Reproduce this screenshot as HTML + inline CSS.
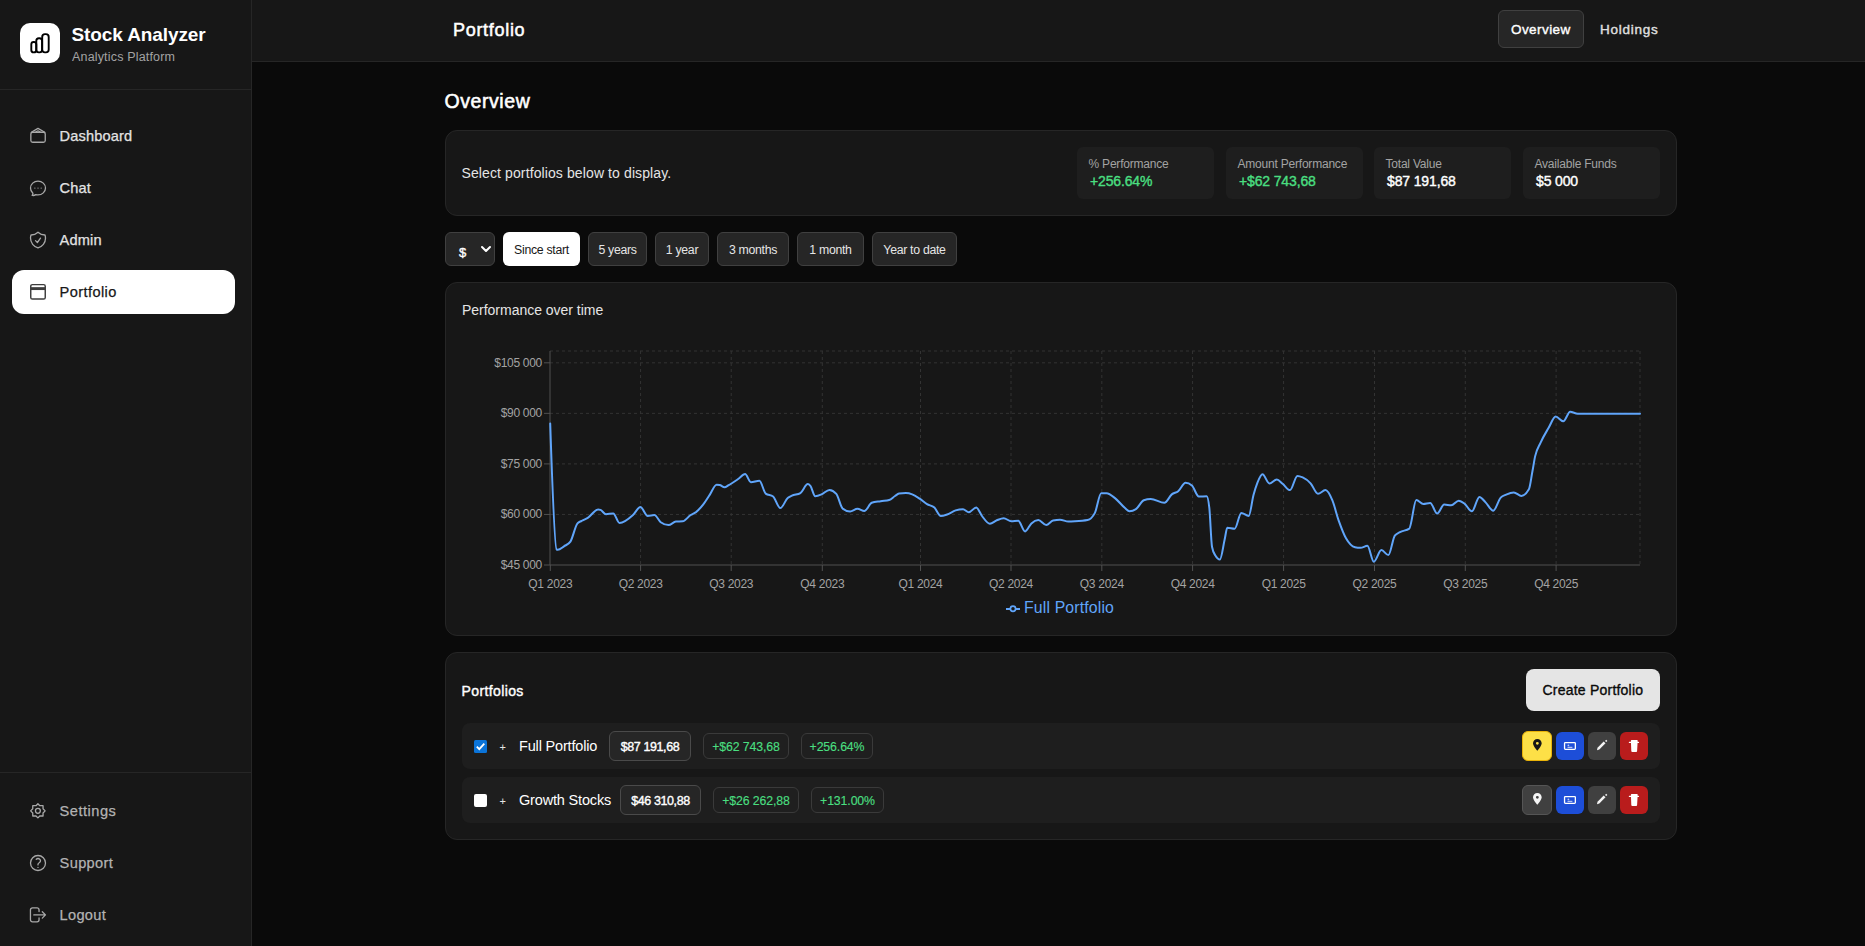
<!DOCTYPE html>
<html><head><meta charset="utf-8"><title>Stock Analyzer - Portfolio</title>
<style>
html,body{margin:0;padding:0;width:1865px;height:946px;overflow:hidden;background:#0a0a0a;font-family:"Liberation Sans",sans-serif;}
.t{position:absolute;white-space:nowrap;}
.b{position:absolute;}
</style></head><body>
<div class="b" style="left:0px;top:0px;width:252px;height:946px;background:#171717;border-radius:0px;box-sizing:border-box;border-right:1px solid #262626;"></div>
<div class="b" style="left:0px;top:89px;width:251px;height:1px;background:#262626;border-radius:0px;box-sizing:border-box;"></div>
<div class="b" style="left:0px;top:772px;width:251px;height:1px;background:#262626;border-radius:0px;box-sizing:border-box;"></div>
<div class="b" style="left:20px;top:23px;width:40px;height:40px;background:#ffffff;border-radius:10px;box-sizing:border-box;"></div>
<svg class="b" style="left:20px;top:23px" width="40" height="40" viewBox="0 0 40 40" fill="none" stroke="#000" stroke-width="1.9" stroke-linejoin="round">
<rect x="11.3" y="19" width="5" height="10.4" rx="2.4"/><rect x="16.3" y="15.2" width="5.8" height="14.2" rx="2.6"/><rect x="22.2" y="11.1" width="6.5" height="18.3" rx="2.8"/></svg>
<div class="t" style="left:71.5px;top:25.15px;font-size:19px;line-height:19px;color:#ffffff;font-weight:700;letter-spacing:-0.1px;">Stock Analyzer</div>
<div class="t" style="left:72px;top:50.77px;font-size:12.5px;line-height:12.5px;color:#a3a3a3;font-weight:400;letter-spacing:0.17px;">Analytics Platform</div>
<div class="t" style="left:59.6px;top:128.79px;font-size:14.6px;line-height:14.6px;color:#e3e3e3;font-weight:400;letter-spacing:0.15px;-webkit-text-stroke:0.25px currentColor;">Dashboard</div>
<div class="t" style="left:59.6px;top:180.79px;font-size:14.6px;line-height:14.6px;color:#e3e3e3;font-weight:400;letter-spacing:0.15px;-webkit-text-stroke:0.25px currentColor;">Chat</div>
<div class="t" style="left:59.6px;top:232.79px;font-size:14.6px;line-height:14.6px;color:#e3e3e3;font-weight:400;letter-spacing:0.15px;-webkit-text-stroke:0.25px currentColor;">Admin</div>
<div class="b" style="left:12px;top:270px;width:223px;height:44px;background:#ffffff;border-radius:12px;box-sizing:border-box;"></div>
<div class="t" style="left:59.6px;top:284.79px;font-size:14.6px;line-height:14.6px;color:#171717;font-weight:400;letter-spacing:0.4px;-webkit-text-stroke:0.25px currentColor;">Portfolio</div>
<div class="t" style="left:59.6px;top:803.99px;font-size:14.6px;line-height:14.6px;color:#b3b3b3;font-weight:400;letter-spacing:0.5px;-webkit-text-stroke:0.25px currentColor;">Settings</div>
<div class="t" style="left:59.6px;top:855.99px;font-size:14.6px;line-height:14.6px;color:#b3b3b3;font-weight:400;letter-spacing:0.35px;-webkit-text-stroke:0.25px currentColor;">Support</div>
<div class="t" style="left:59.6px;top:907.99px;font-size:14.6px;line-height:14.6px;color:#b3b3b3;font-weight:400;letter-spacing:0.3px;-webkit-text-stroke:0.25px currentColor;">Logout</div>
<svg class="b" style="left:28px;top:125px" width="20" height="20" viewBox="0 0 24 24" fill="none" stroke="#a8a8a8" stroke-width="1.560" stroke-linecap="round" stroke-linejoin="round"><rect x="3.42" y="8.70" width="17.28" height="12.00" rx="2.2"/><path d="M4.02 8.70 L12.00 4.08 L20.10 8.70"/><path d="M9.40 8.70 Q12.00 5.28 14.60 8.70"/></svg>
<svg class="b" style="left:28px;top:178px" width="20" height="20" viewBox="0 0 24 24" fill="none" stroke="#a8a8a8" stroke-width="1.560" stroke-linecap="round" stroke-linejoin="round"><path d="M21 12c0 4.556-4.03 8.25-9 8.25a9.764 9.764 0 0 1-2.555-.337A5.972 5.972 0 0 1 5.41 20.97a5.969 5.969 0 0 1-.474-.065 4.48 4.48 0 0 0 .978-2.025c.09-.457-.133-.901-.467-1.226C3.93 16.178 3 14.189 3 12c0-4.556 4.03-8.25 9-8.25s9 3.694 9 8.25Z"/><g fill="#a8a8a8" stroke="none"><circle cx="8.25" cy="12" r="0.75"/><circle cx="12" cy="12" r="0.75"/><circle cx="15.75" cy="12" r="0.75"/></g></svg>
<svg class="b" style="left:28px;top:230px" width="20" height="20" viewBox="0 0 24 24" fill="none" stroke="#a8a8a8" stroke-width="1.560" stroke-linecap="round" stroke-linejoin="round"><path d="M9 12.75 11.25 15 15 9.75m-3-7.036A11.959 11.959 0 0 1 3.598 6 11.99 11.99 0 0 0 3 9.749c0 5.592 3.824 10.29 9 11.623 5.176-1.332 9-6.03 9-11.622 0-1.31-.21-2.571-.598-3.751h-.152c-3.196 0-6.1-1.248-8.25-3.285Z"/></svg>
<svg class="b" style="left:28px;top:282px" width="20" height="20" viewBox="0 0 20 20" fill="none" stroke="#3d3d3d" stroke-width="1.45"><rect x="2.75" y="2.6" width="14.5" height="14.4" rx="1.6"/><path d="M2.75 6.6h14.5" stroke-width="2.9"/></svg>
<svg class="b" style="left:28px;top:801px" width="20" height="20" viewBox="0 0 20 20" fill="none" stroke="#a8a8a8" stroke-width="1.3" stroke-linejoin="round"><path d="M9.90 2.80 L11.80 4.70 L15.05 4.70 L15.05 7.75 L17.15 9.85 L15.05 11.95 L15.05 15.00 L11.80 15.00 L9.90 16.90 L8.00 15.00 L4.75 15.00 L4.75 11.95 L2.65 9.85 L4.75 7.75 L4.75 4.70 L8.00 4.70Z"/><circle cx="9.9" cy="9.85" r="2.45"/></svg>
<svg class="b" style="left:28px;top:853px" width="20" height="20" viewBox="0 0 24 24" fill="none" stroke="#a8a8a8" stroke-width="1.560" stroke-linecap="round" stroke-linejoin="round"><path d="M9.879 7.519c1.171-1.025 3.071-1.025 4.242 0 1.172 1.025 1.172 2.687 0 3.712-.203.179-.43.326-.67.442-.745.361-1.45.999-1.45 1.827v.75M21 12a9 9 0 1 1-18 0 9 9 0 0 1 18 0Zm-9 5.25h.008v.008H12v-.008Z"/></svg>
<svg class="b" style="left:28px;top:905px" width="20" height="20" viewBox="0 0 20 20" fill="none" stroke="#a8a8a8" stroke-width="1.3" stroke-linecap="round" stroke-linejoin="round"><path d="M11.05 6.6V4.95A2 2 0 0 0 9.05 2.95H4.45A2 2 0 0 0 2.45 4.95V14.85A2 2 0 0 0 4.45 16.85H9.05A2 2 0 0 0 11.05 14.85V13.0"/><path d="M5.8 9.9H17.3M14.3 6.7L17.5 9.9L14.3 13.1"/></svg>
<div class="b" style="left:252px;top:0px;width:1613px;height:62px;background:#171717;border-radius:0px;box-sizing:border-box;border-bottom:1px solid #262626;"></div>
<div class="t" style="left:453px;top:20.70px;font-size:18px;line-height:18px;color:#ffffff;font-weight:400;letter-spacing:0.7px;-webkit-text-stroke:0.50px currentColor;">Portfolio</div>
<div class="b" style="left:1498px;top:10px;width:86px;height:38px;background:#262626;border:1px solid #404040;border-radius:6px;box-sizing:border-box;"></div>
<div class="t" style="left:1511px;top:22.52px;font-size:13.5px;line-height:13.5px;color:#ffffff;font-weight:400;letter-spacing:0.43px;-webkit-text-stroke:0.38px currentColor;">Overview</div>
<div class="t" style="left:1600px;top:22.52px;font-size:13.5px;line-height:13.5px;color:#e0e0e0;font-weight:400;letter-spacing:0.74px;-webkit-text-stroke:0.38px currentColor;">Holdings</div>
<div class="t" style="left:444.5px;top:92.42px;font-size:19.5px;line-height:19.5px;color:#ffffff;font-weight:400;letter-spacing:0.57px;-webkit-text-stroke:0.55px currentColor;">Overview</div>
<div class="b" style="left:445px;top:130px;width:1232px;height:86px;background:#171717;border:1px solid #262626;border-radius:12px;box-sizing:border-box;"></div>
<div class="t" style="left:461.5px;top:165.90px;font-size:14px;line-height:14px;color:#e5e5e5;font-weight:400;letter-spacing:0.11px;">Select portfolios below to display.</div>
<div class="b" style="left:1077px;top:147px;width:137px;height:52px;background:#1e1e1e;border-radius:6px;box-sizing:border-box;"></div>
<div class="t" style="left:1088.5px;top:157.70px;font-size:12px;line-height:12px;color:#a3a3a3;font-weight:400;letter-spacing:-0.21px;">% Performance</div>
<div class="t" style="left:1090px;top:174.00px;font-size:14px;line-height:14px;color:#4ade80;font-weight:400;letter-spacing:-0.14px;-webkit-text-stroke:0.39px currentColor;">+256.64%</div>
<div class="b" style="left:1226px;top:147px;width:137px;height:52px;background:#1e1e1e;border-radius:6px;box-sizing:border-box;"></div>
<div class="t" style="left:1237.5px;top:157.70px;font-size:12px;line-height:12px;color:#a3a3a3;font-weight:400;letter-spacing:-0.21px;">Amount Performance</div>
<div class="t" style="left:1239px;top:174.00px;font-size:14px;line-height:14px;color:#4ade80;font-weight:400;letter-spacing:-0.14px;-webkit-text-stroke:0.39px currentColor;">+$62 743,68</div>
<div class="b" style="left:1374px;top:147px;width:137px;height:52px;background:#1e1e1e;border-radius:6px;box-sizing:border-box;"></div>
<div class="t" style="left:1385.5px;top:157.70px;font-size:12px;line-height:12px;color:#a3a3a3;font-weight:400;letter-spacing:-0.21px;">Total Value</div>
<div class="t" style="left:1387px;top:174.00px;font-size:14px;line-height:14px;color:#ffffff;font-weight:400;letter-spacing:-0.14px;-webkit-text-stroke:0.39px currentColor;">$87 191,68</div>
<div class="b" style="left:1523px;top:147px;width:137px;height:52px;background:#1e1e1e;border-radius:6px;box-sizing:border-box;"></div>
<div class="t" style="left:1534.5px;top:157.70px;font-size:12px;line-height:12px;color:#a3a3a3;font-weight:400;letter-spacing:-0.21px;">Available Funds</div>
<div class="t" style="left:1536px;top:174.00px;font-size:14px;line-height:14px;color:#ffffff;font-weight:400;letter-spacing:-0.14px;-webkit-text-stroke:0.39px currentColor;">$5 000</div>
<div class="b" style="left:445px;top:232px;width:50px;height:34px;background:#262626;border:1px solid #404040;border-radius:6px;box-sizing:border-box;"></div>
<div class="t" style="left:459px;top:245.95px;font-size:13px;line-height:13px;color:#ffffff;font-weight:400;letter-spacing:0px;-webkit-text-stroke:0.4px #fff;">$</div>
<svg class="b" style="left:480px;top:244px" width="12" height="10" viewBox="0 0 12 10"><path d="M2 3 L6 7 L10 3" fill="none" stroke="#fff" stroke-width="2" stroke-linecap="round" stroke-linejoin="round"/></svg>
<div class="b" style="left:503px;top:232px;width:77px;height:34px;background:#ffffff;border-radius:6px;box-sizing:border-box;"></div>
<div class="t" style="left:503px;top:232px;width:77px;height:34px;line-height:36.5px;text-align:center;font-size:12.3px;letter-spacing:-0.3px;color:#171717">Since start</div>
<div class="b" style="left:588px;top:232px;width:59px;height:34px;background:#262626;border:1px solid #404040;border-radius:6px;box-sizing:border-box;"></div>
<div class="t" style="left:588px;top:232px;width:59px;height:34px;line-height:36.5px;text-align:center;font-size:12.3px;letter-spacing:-0.3px;color:#e5e5e5">5 years</div>
<div class="b" style="left:655px;top:232px;width:54px;height:34px;background:#262626;border:1px solid #404040;border-radius:6px;box-sizing:border-box;"></div>
<div class="t" style="left:655px;top:232px;width:54px;height:34px;line-height:36.5px;text-align:center;font-size:12.3px;letter-spacing:-0.3px;color:#e5e5e5">1 year</div>
<div class="b" style="left:717px;top:232px;width:72px;height:34px;background:#262626;border:1px solid #404040;border-radius:6px;box-sizing:border-box;"></div>
<div class="t" style="left:717px;top:232px;width:72px;height:34px;line-height:36.5px;text-align:center;font-size:12.3px;letter-spacing:-0.3px;color:#e5e5e5">3 months</div>
<div class="b" style="left:797px;top:232px;width:67px;height:34px;background:#262626;border:1px solid #404040;border-radius:6px;box-sizing:border-box;"></div>
<div class="t" style="left:797px;top:232px;width:67px;height:34px;line-height:36.5px;text-align:center;font-size:12.3px;letter-spacing:-0.3px;color:#e5e5e5">1 month</div>
<div class="b" style="left:872px;top:232px;width:85px;height:34px;background:#262626;border:1px solid #404040;border-radius:6px;box-sizing:border-box;"></div>
<div class="t" style="left:872px;top:232px;width:85px;height:34px;line-height:36.5px;text-align:center;font-size:12.3px;letter-spacing:-0.3px;color:#e5e5e5">Year to date</div>
<div class="b" style="left:445px;top:282px;width:1232px;height:354px;background:#171717;border:1px solid #262626;border-radius:12px;box-sizing:border-box;"></div>
<div class="t" style="left:462px;top:302.90px;font-size:14px;line-height:14px;color:#e5e5e5;font-weight:400;letter-spacing:-0.02px;">Performance over time</div>
<svg class="b" style="left:0;top:0" width="1865" height="946"><g stroke="#333333" stroke-width="1" stroke-dasharray="3 3"><line x1="550.0" y1="351.0" x2="1640" y2="351.0"/><line x1="550.0" y1="362.8" x2="1640" y2="362.8"/><line x1="550.0" y1="413.35" x2="1640" y2="413.35"/><line x1="550.0" y1="463.9" x2="1640" y2="463.9"/><line x1="550.0" y1="514.45" x2="1640" y2="514.45"/><line x1="640.6" y1="351" x2="640.6" y2="565.0"/><line x1="731.2" y1="351" x2="731.2" y2="565.0"/><line x1="822.3" y1="351" x2="822.3" y2="565.0"/><line x1="920.5" y1="351" x2="920.5" y2="565.0"/><line x1="1011" y1="351" x2="1011" y2="565.0"/><line x1="1101.8" y1="351" x2="1101.8" y2="565.0"/><line x1="1192.6" y1="351" x2="1192.6" y2="565.0"/><line x1="1283.6" y1="351" x2="1283.6" y2="565.0"/><line x1="1374.5" y1="351" x2="1374.5" y2="565.0"/><line x1="1465.3" y1="351" x2="1465.3" y2="565.0"/><line x1="1556.1" y1="351" x2="1556.1" y2="565.0"/><line x1="1640.0" y1="351" x2="1640.0" y2="565.0"/></g><g stroke="#505050" stroke-width="1"><line x1="550.0" y1="351" x2="550.0" y2="565.0"/><line x1="550.0" y1="565.0" x2="1640" y2="565.0"/><line x1="544.0" y1="362.8" x2="550.0" y2="362.8"/><line x1="544.0" y1="413.35" x2="550.0" y2="413.35"/><line x1="544.0" y1="463.9" x2="550.0" y2="463.9"/><line x1="544.0" y1="514.45" x2="550.0" y2="514.45"/><line x1="544.0" y1="565.0" x2="550.0" y2="565.0"/><line x1="550.3" y1="565.0" x2="550.3" y2="571.0"/><line x1="640.6" y1="565.0" x2="640.6" y2="571.0"/><line x1="731.2" y1="565.0" x2="731.2" y2="571.0"/><line x1="822.3" y1="565.0" x2="822.3" y2="571.0"/><line x1="920.5" y1="565.0" x2="920.5" y2="571.0"/><line x1="1011" y1="565.0" x2="1011" y2="571.0"/><line x1="1101.8" y1="565.0" x2="1101.8" y2="571.0"/><line x1="1192.6" y1="565.0" x2="1192.6" y2="571.0"/><line x1="1283.6" y1="565.0" x2="1283.6" y2="571.0"/><line x1="1374.5" y1="565.0" x2="1374.5" y2="571.0"/><line x1="1465.3" y1="565.0" x2="1465.3" y2="571.0"/><line x1="1556.1" y1="565.0" x2="1556.1" y2="571.0"/></g><path d="M550.2,423.5C552.3,485.9 554.5,548.3 556.6,549.5C557.0,549.7 557.3,549.8 557.7,549.8C559.8,549.8 561.9,547.7 564.0,546.3C566.1,544.9 568.3,544.7 570.4,541.6C572.8,538.1 575.1,526.0 577.5,523.3C578.8,521.8 580.2,521.7 581.5,521.0C583.6,519.8 585.7,519.1 587.8,517.8C591.2,515.7 594.7,509.4 598.1,509.4C598.9,509.4 599.7,509.6 600.5,509.9C602.3,510.6 604.2,514.2 606.0,514.2C608.4,514.2 610.8,513.4 613.2,513.4C615.3,513.4 617.4,523.0 619.5,523.0C624.0,523.0 628.5,519.1 633.0,515.0C635.5,512.8 637.9,507.0 640.4,507.0C642.8,507.0 645.3,515.9 647.7,515.9C649.9,515.9 652.2,515.0 654.4,515.0C656.5,515.0 658.6,520.7 660.7,522.2C663.3,524.1 665.9,525.0 668.5,525.0C671.0,525.0 673.4,521.8 675.9,521.6C678.2,521.4 680.4,521.5 682.7,521.3C685.4,521.1 688.0,516.7 690.7,515.0C692.5,513.9 694.2,513.4 696.0,512.1C698.4,510.2 700.9,507.5 703.3,504.4C705.4,501.7 707.6,498.0 709.7,494.9C712.0,491.5 714.3,484.8 716.6,484.8C717.6,484.8 718.7,484.9 719.7,485.1C721.3,485.4 722.9,487.2 724.5,487.2C725.9,487.2 727.3,485.9 728.7,485.1C731.9,483.4 735.0,481.2 738.2,479.0C740.5,477.4 742.8,474.1 745.1,474.1C747.0,474.1 749.0,482.2 750.9,482.2C753.7,482.2 756.6,480.8 759.4,480.8C761.5,480.8 763.6,492.0 765.7,493.6C768.2,495.5 770.6,494.6 773.1,496.5C775.5,498.4 777.9,508.1 780.3,508.1C782.8,508.1 785.2,500.2 787.7,498.1C789.1,496.9 790.5,496.4 791.9,495.7C794.7,494.3 797.6,494.8 800.4,493.1C802.9,491.6 805.3,484.1 807.8,484.1C808.7,484.1 809.5,484.9 810.4,485.9C812.0,487.8 813.6,496.2 815.2,496.2C817.3,496.2 819.4,495.3 821.5,494.4C824.2,493.3 826.8,489.9 829.5,489.9C831.8,489.9 834.0,491.2 836.3,493.8C838.4,496.2 840.6,506.9 842.7,508.6C845.2,510.5 847.6,511.5 850.1,511.5C852.6,511.5 855.0,508.8 857.5,508.8C859.8,508.8 862.0,511.1 864.3,511.1C866.8,511.1 869.2,503.7 871.7,502.8C874.7,501.7 877.7,501.7 880.7,501.2C883.5,500.7 886.4,500.8 889.2,500.0C891.1,499.5 893.1,497.2 895.0,496.0C896.3,495.2 897.7,493.8 899.0,493.6C901.3,493.3 903.6,493.1 905.9,493.1C908.0,493.1 910.1,493.6 912.2,494.4C914.7,495.3 917.1,497.0 919.6,498.6C922.1,500.2 924.5,502.7 927.0,504.2C929.5,505.7 931.9,505.3 934.4,507.6C936.5,509.6 938.7,516.0 940.8,516.0C942.9,516.0 945.0,515.2 947.1,514.5C949.9,513.5 952.8,511.3 955.6,510.4C958.1,509.6 960.5,509.2 963.0,509.2C964.9,509.2 966.9,512.3 968.8,512.3C971.3,512.3 973.7,507.4 976.2,507.4C978.1,507.4 980.1,513.5 982.0,516.0C984.6,519.4 987.3,523.8 989.9,523.8C992.2,523.8 994.5,521.2 996.8,520.3C999.1,519.4 1001.4,518.2 1003.7,518.2C1006.2,518.2 1008.8,521.3 1011.3,521.3C1013.6,521.3 1015.9,520.8 1018.2,520.8C1020.5,520.8 1022.8,531.4 1025.1,531.4C1027.2,531.4 1029.3,525.3 1031.4,523.4C1033.7,521.3 1036.0,520.1 1038.3,520.1C1040.9,520.1 1043.6,525.0 1046.2,525.0C1048.5,525.0 1050.8,521.0 1053.1,520.5C1055.4,520.0 1057.7,519.7 1060.0,519.7C1062.8,519.7 1065.6,521.5 1068.4,521.5C1070.5,521.5 1072.7,521.4 1074.8,521.3C1079.0,521.1 1083.3,520.9 1087.5,520.1C1090.0,519.6 1092.4,517.7 1094.9,512.9C1097.0,508.8 1099.1,493.3 1101.2,493.3C1103.0,493.3 1104.7,493.3 1106.5,493.3C1109.3,493.3 1112.2,495.9 1115.0,498.1C1118.3,500.6 1121.7,505.4 1125.0,508.1C1126.5,509.3 1128.0,511.3 1129.5,511.3C1131.6,511.3 1133.8,510.6 1135.9,509.2C1138.5,507.5 1141.2,501.2 1143.8,500.2C1146.1,499.3 1148.4,498.9 1150.7,498.9C1155.3,498.9 1159.8,502.8 1164.4,502.8C1166.9,502.8 1169.3,496.4 1171.8,494.4C1173.9,492.7 1176.1,492.9 1178.2,491.2C1180.7,489.2 1183.1,482.7 1185.6,482.7C1187.7,482.7 1189.8,483.6 1191.9,485.4C1194.2,487.4 1196.5,496.5 1198.8,496.5C1201.4,496.5 1204.1,496.3 1206.7,496.3C1207.6,496.3 1208.4,500.1 1209.3,507.6C1210.2,515.4 1211.1,541.9 1212.0,546.7C1213.1,552.4 1214.1,553.3 1215.2,555.2C1216.8,558.0 1218.3,559.4 1219.9,559.4C1221.5,559.4 1223.1,546.3 1224.7,539.3C1225.6,535.5 1226.4,527.7 1227.3,527.7C1229.8,527.7 1232.2,528.7 1234.7,528.7C1236.9,528.7 1239.1,512.9 1241.3,512.9C1243.8,512.9 1246.2,516.0 1248.7,516.0C1250.3,516.0 1251.9,500.8 1253.5,494.9C1254.7,490.4 1256.0,486.4 1257.2,483.3C1259.0,478.8 1260.7,474.3 1262.5,474.3C1264.8,474.3 1267.1,483.5 1269.4,483.5C1271.9,483.5 1274.3,479.6 1276.8,479.6C1278.7,479.6 1280.7,482.3 1282.6,483.8C1285.1,485.7 1287.5,490.1 1290.0,490.1C1292.5,490.1 1294.9,475.9 1297.4,475.9C1299.2,475.9 1300.9,476.6 1302.7,477.4C1305.3,478.6 1308.0,480.4 1310.6,483.3C1313.1,486.0 1315.5,493.8 1318.0,493.8C1320.5,493.8 1322.9,490.1 1325.4,490.1C1327.7,490.1 1330.0,494.8 1332.3,500.2C1334.4,505.2 1336.5,514.3 1338.6,520.3C1341.1,527.3 1343.5,533.8 1346.0,538.2C1349.0,543.5 1352.0,546.5 1355.0,547.2C1356.8,547.6 1358.7,547.8 1360.5,547.8C1362.8,547.8 1365.1,545.8 1367.4,545.8C1369.5,545.8 1371.7,561.7 1373.8,561.7C1376.3,561.7 1378.9,550.1 1381.4,550.1C1383.7,550.1 1386.1,555.1 1388.4,555.1C1390.5,555.1 1392.7,538.5 1394.8,535.6C1396.5,533.3 1398.3,533.1 1400.0,532.1C1403.1,530.3 1406.2,530.9 1409.3,528.6C1411.6,526.8 1414.0,500.1 1416.3,500.1C1418.6,500.1 1421.0,504.0 1423.3,504.0C1425.6,504.0 1427.9,503.0 1430.2,503.0C1432.5,503.0 1434.9,513.5 1437.2,513.5C1439.5,513.5 1441.9,504.5 1444.2,504.5C1446.5,504.5 1448.9,505.3 1451.2,505.3C1453.7,505.3 1456.2,500.7 1458.7,500.7C1460.6,500.7 1462.6,502.2 1464.5,503.6C1467.0,505.4 1469.4,511.3 1471.9,511.3C1474.4,511.3 1476.9,496.9 1479.4,496.9C1481.5,496.9 1483.5,500.4 1485.6,502.4C1488.1,504.9 1490.7,510.7 1493.2,510.7C1495.7,510.7 1498.2,500.2 1500.7,497.6C1502.5,495.7 1504.4,495.4 1506.2,494.6C1508.7,493.5 1511.3,492.5 1513.8,492.5C1516.3,492.5 1518.9,495.9 1521.4,495.9C1523.9,495.9 1526.4,493.7 1528.9,489.3C1530.1,487.2 1531.2,477.8 1532.4,471.5C1533.3,466.7 1534.2,460.5 1535.1,456.4C1536.9,448.0 1538.8,446.7 1540.6,442.6C1543.3,436.5 1546.1,432.2 1548.8,427.5C1551.1,423.6 1553.4,416.5 1555.7,416.5C1558.2,416.5 1560.8,421.3 1563.3,421.3C1565.6,421.3 1567.9,411.7 1570.2,411.7C1572.7,411.7 1575.2,413.7 1577.7,413.7C1585.1,413.7 1592.6,413.7 1600.0,413.7C1613.3,413.7 1626.7,413.7 1640.0,413.7" fill="none" stroke="#60a5fa" stroke-width="2" stroke-linejoin="round" stroke-linecap="round"/><g stroke="#60a5fa" stroke-width="2" fill="none"><line x1="1006" y1="609" x2="1020" y2="609"/><circle cx="1013" cy="608.8" r="2.6" stroke-width="1.7" fill="#171717"/></g></svg>
<div class="t" style="left:440px;width:102px;text-align:right;top:357.1px;font-size:12px;line-height:12px;letter-spacing:-0.3px;color:#a3a3a3">$105 000</div>
<div class="t" style="left:440px;width:102px;text-align:right;top:407.1px;font-size:12px;line-height:12px;letter-spacing:-0.3px;color:#a3a3a3">$90 000</div>
<div class="t" style="left:440px;width:102px;text-align:right;top:458.1px;font-size:12px;line-height:12px;letter-spacing:-0.3px;color:#a3a3a3">$75 000</div>
<div class="t" style="left:440px;width:102px;text-align:right;top:508.1px;font-size:12px;line-height:12px;letter-spacing:-0.3px;color:#a3a3a3">$60 000</div>
<div class="t" style="left:440px;width:102px;text-align:right;top:559.1px;font-size:12px;line-height:12px;letter-spacing:-0.3px;color:#a3a3a3">$45 000</div>
<div class="t" style="left:510.29999999999995px;width:80px;text-align:center;top:577.7px;font-size:12px;line-height:12px;letter-spacing:-0.3px;color:#a3a3a3">Q1 2023</div>
<div class="t" style="left:600.6px;width:80px;text-align:center;top:577.7px;font-size:12px;line-height:12px;letter-spacing:-0.3px;color:#a3a3a3">Q2 2023</div>
<div class="t" style="left:691.2px;width:80px;text-align:center;top:577.7px;font-size:12px;line-height:12px;letter-spacing:-0.3px;color:#a3a3a3">Q3 2023</div>
<div class="t" style="left:782.3px;width:80px;text-align:center;top:577.7px;font-size:12px;line-height:12px;letter-spacing:-0.3px;color:#a3a3a3">Q4 2023</div>
<div class="t" style="left:880.5px;width:80px;text-align:center;top:577.7px;font-size:12px;line-height:12px;letter-spacing:-0.3px;color:#a3a3a3">Q1 2024</div>
<div class="t" style="left:971px;width:80px;text-align:center;top:577.7px;font-size:12px;line-height:12px;letter-spacing:-0.3px;color:#a3a3a3">Q2 2024</div>
<div class="t" style="left:1061.8px;width:80px;text-align:center;top:577.7px;font-size:12px;line-height:12px;letter-spacing:-0.3px;color:#a3a3a3">Q3 2024</div>
<div class="t" style="left:1152.6px;width:80px;text-align:center;top:577.7px;font-size:12px;line-height:12px;letter-spacing:-0.3px;color:#a3a3a3">Q4 2024</div>
<div class="t" style="left:1243.6px;width:80px;text-align:center;top:577.7px;font-size:12px;line-height:12px;letter-spacing:-0.3px;color:#a3a3a3">Q1 2025</div>
<div class="t" style="left:1334.5px;width:80px;text-align:center;top:577.7px;font-size:12px;line-height:12px;letter-spacing:-0.3px;color:#a3a3a3">Q2 2025</div>
<div class="t" style="left:1425.3px;width:80px;text-align:center;top:577.7px;font-size:12px;line-height:12px;letter-spacing:-0.3px;color:#a3a3a3">Q3 2025</div>
<div class="t" style="left:1516.1px;width:80px;text-align:center;top:577.7px;font-size:12px;line-height:12px;letter-spacing:-0.3px;color:#a3a3a3">Q4 2025</div>
<div class="t" style="left:1024px;top:599.77px;font-size:15.8px;line-height:15.8px;color:#60a5fa;font-weight:400;letter-spacing:0.16px;">Full Portfolio</div>
<div class="b" style="left:445px;top:652px;width:1232px;height:188px;background:#171717;border:1px solid #262626;border-radius:12px;box-sizing:border-box;"></div>
<div class="t" style="left:461.5px;top:684.10px;font-size:14px;line-height:14px;color:#ffffff;font-weight:400;letter-spacing:0.39px;-webkit-text-stroke:0.39px currentColor;">Portfolios</div>
<div class="b" style="left:1526px;top:669px;width:134px;height:42px;background:#e5e5e5;border-radius:8px;box-sizing:border-box;"></div>
<div class="t" style="left:1542.5px;top:683.10px;font-size:14px;line-height:14px;color:#0a0a0a;font-weight:400;letter-spacing:0.22px;-webkit-text-stroke:0.35px #0a0a0a;">Create Portfolio</div>
<div class="b" style="left:462px;top:723px;width:1198px;height:46px;background:#1e1e1e;border-radius:8px;box-sizing:border-box;"></div>
<div class="b" style="left:474px;top:740px;width:13px;height:13px;background:#0b74d9;border-radius:1.5px;box-sizing:border-box;"></div>
<svg class="b" style="left:474px;top:740px" width="13" height="13" viewBox="0 0 13 13"><path d="M2.8 6.6 L5.3 9.1 L10.3 3.6" fill="none" stroke="#fff" stroke-width="1.8"/></svg>
<div class="t" style="left:499.6px;top:742.25px;font-size:11px;line-height:11px;color:#e5e5e5;font-weight:400;letter-spacing:0px;">+</div>
<div class="t" style="left:519px;top:739.07px;font-size:14.5px;line-height:14.5px;color:#ffffff;font-weight:400;letter-spacing:-0.17px;">Full Portfolio</div>
<div class="b" style="left:609px;top:731px;width:82px;height:30px;background:#262626;border:1px solid #4a4a4a;border-radius:6px;box-sizing:border-box;"></div>
<div class="t" style="left:609px;top:731px;width:82px;height:30px;line-height:32.6px;text-align:center;font-size:12.5px;letter-spacing:-0.39px;color:#ffffff;-webkit-text-stroke:0.38px #fff">$87 191,68</div>
<div class="b" style="left:703px;top:733px;width:86px;height:26px;background:#1f1f1f;border:1px solid #3a3a3a;border-radius:6px;box-sizing:border-box;"></div>
<div class="t" style="left:703px;top:733px;width:86px;height:26px;line-height:28.6px;text-align:center;font-size:12.3px;letter-spacing:-0.11px;color:#4ade80;-webkit-text-stroke:0.15px #4ade80">+$62 743,68</div>
<div class="b" style="left:801px;top:733px;width:72px;height:26px;background:#1f1f1f;border:1px solid #3a3a3a;border-radius:6px;box-sizing:border-box;"></div>
<div class="t" style="left:801px;top:733px;width:72px;height:26px;line-height:28.6px;text-align:center;font-size:12.3px;letter-spacing:-0.11px;color:#4ade80;-webkit-text-stroke:0.15px #4ade80">+256.64%</div>
<div class="b" style="left:1522px;top:731px;width:30px;height:30px;background:#fde047;border:1px solid #eab308;border-radius:6px;box-sizing:border-box;"></div>
<svg class="b" style="left:1533px;top:739.1px" width="8.7" height="11.6" viewBox="0 0 384 512"><path fill="#171717" fill-rule="evenodd" d="M215.7 499.2C267 435 384 279.4 384 192C384 86 298 0 192 0S0 86 0 192c0 87.4 117 243 168.3 307.2c12.3 15.3 35.1 15.3 47.4 0zM192 128a64 64 0 1 1 0 128 64 64 0 1 1 0-128z"/></svg>
<div class="b" style="left:1556px;top:732px;width:28px;height:28px;background:#1d4ed8;border-radius:6px;box-sizing:border-box;"></div>
<svg class="b" style="left:1563px;top:741px" width="14" height="10" viewBox="0 0 14 10"><rect x="1.55" y="1.55" width="10.8" height="6.8" rx="0.8" fill="none" stroke="#fff" stroke-width="1.3"/><circle cx="5.4" cy="4.3" r="0.9" fill="#c0cdf5"/><path d="M4.5 6.4h4.9" stroke="#b3c3f2" stroke-width="1.3"/></svg>
<div class="b" style="left:1588px;top:732px;width:28px;height:28px;background:#404040;border-radius:6px;box-sizing:border-box;"></div>
<svg class="b" style="left:1590px;top:736px" width="52" height="20" viewBox="1590 736 52 20"><g transform="translate(0,0)"><path fill="#f5f5f5" d="M1597 750.2 L1599.3 749.5 L1605.5 743.3 L1603.7 741.5 L1597.5 747.7Z"/><path fill="#f5f5f5" d="M1606.2 739.7 L1607.4 740.9 L1606.2 742.1 L1605 740.9Z"/></g></svg>
<div class="b" style="left:1620px;top:732px;width:28px;height:28px;background:#b91c1c;border-radius:6px;box-sizing:border-box;"></div>
<svg class="b" style="left:1590px;top:736px" width="52" height="20" viewBox="1590 736 52 20"><rect x="1628.8" y="741.8" width="10.3" height="1.3" rx="0.6" fill="#fff"/><path fill="#fff" d="M1631.6 740.1h5.4a.7 .7 0 0 1 .7 .7L1637.1 751a1 1 0 0 1 -1 1h-3.8a1 1 0 0 1 -1 -1L1630.9 740.8a.7 .7 0 0 1 .7 -.7z"/></svg>
<div class="b" style="left:462px;top:777px;width:1198px;height:46px;background:#1e1e1e;border-radius:8px;box-sizing:border-box;"></div>
<div class="b" style="left:474px;top:794px;width:13px;height:13px;background:#ffffff;border-radius:2px;box-sizing:border-box;"></div>
<div class="t" style="left:499.6px;top:796.25px;font-size:11px;line-height:11px;color:#e5e5e5;font-weight:400;letter-spacing:0px;">+</div>
<div class="t" style="left:519px;top:793.07px;font-size:14.5px;line-height:14.5px;color:#ffffff;font-weight:400;letter-spacing:-0.17px;">Growth Stocks</div>
<div class="b" style="left:620px;top:785px;width:81px;height:30px;background:#262626;border:1px solid #4a4a4a;border-radius:6px;box-sizing:border-box;"></div>
<div class="t" style="left:620px;top:785px;width:81px;height:30px;line-height:32.6px;text-align:center;font-size:12.5px;letter-spacing:-0.39px;color:#ffffff;-webkit-text-stroke:0.38px #fff">$46 310,88</div>
<div class="b" style="left:713px;top:787px;width:86px;height:26px;background:#1f1f1f;border:1px solid #3a3a3a;border-radius:6px;box-sizing:border-box;"></div>
<div class="t" style="left:713px;top:787px;width:86px;height:26px;line-height:28.6px;text-align:center;font-size:12.3px;letter-spacing:-0.11px;color:#4ade80;-webkit-text-stroke:0.15px #4ade80">+$26 262,88</div>
<div class="b" style="left:811px;top:787px;width:73px;height:26px;background:#1f1f1f;border:1px solid #3a3a3a;border-radius:6px;box-sizing:border-box;"></div>
<div class="t" style="left:811px;top:787px;width:73px;height:26px;line-height:28.6px;text-align:center;font-size:12.3px;letter-spacing:-0.11px;color:#4ade80;-webkit-text-stroke:0.15px #4ade80">+131.00%</div>
<div class="b" style="left:1522px;top:785px;width:30px;height:30px;background:#404040;border:1px solid #555555;border-radius:6px;box-sizing:border-box;"></div>
<svg class="b" style="left:1533px;top:793.1px" width="8.7" height="11.6" viewBox="0 0 384 512"><path fill="#f5f5f5" fill-rule="evenodd" d="M215.7 499.2C267 435 384 279.4 384 192C384 86 298 0 192 0S0 86 0 192c0 87.4 117 243 168.3 307.2c12.3 15.3 35.1 15.3 47.4 0zM192 128a64 64 0 1 1 0 128 64 64 0 1 1 0-128z"/></svg>
<div class="b" style="left:1556px;top:786px;width:28px;height:28px;background:#1d4ed8;border-radius:6px;box-sizing:border-box;"></div>
<svg class="b" style="left:1563px;top:795px" width="14" height="10" viewBox="0 0 14 10"><rect x="1.55" y="1.55" width="10.8" height="6.8" rx="0.8" fill="none" stroke="#fff" stroke-width="1.3"/><circle cx="5.4" cy="4.3" r="0.9" fill="#c0cdf5"/><path d="M4.5 6.4h4.9" stroke="#b3c3f2" stroke-width="1.3"/></svg>
<div class="b" style="left:1588px;top:786px;width:28px;height:28px;background:#404040;border-radius:6px;box-sizing:border-box;"></div>
<svg class="b" style="left:1590px;top:790px" width="52" height="20" viewBox="1590 736 52 20"><g transform="translate(0,0)"><path fill="#f5f5f5" d="M1597 750.2 L1599.3 749.5 L1605.5 743.3 L1603.7 741.5 L1597.5 747.7Z"/><path fill="#f5f5f5" d="M1606.2 739.7 L1607.4 740.9 L1606.2 742.1 L1605 740.9Z"/></g></svg>
<div class="b" style="left:1620px;top:786px;width:28px;height:28px;background:#b91c1c;border-radius:6px;box-sizing:border-box;"></div>
<svg class="b" style="left:1590px;top:790px" width="52" height="20" viewBox="1590 736 52 20"><rect x="1628.8" y="741.8" width="10.3" height="1.3" rx="0.6" fill="#fff"/><path fill="#fff" d="M1631.6 740.1h5.4a.7 .7 0 0 1 .7 .7L1637.1 751a1 1 0 0 1 -1 1h-3.8a1 1 0 0 1 -1 -1L1630.9 740.8a.7 .7 0 0 1 .7 -.7z"/></svg>
</body></html>
